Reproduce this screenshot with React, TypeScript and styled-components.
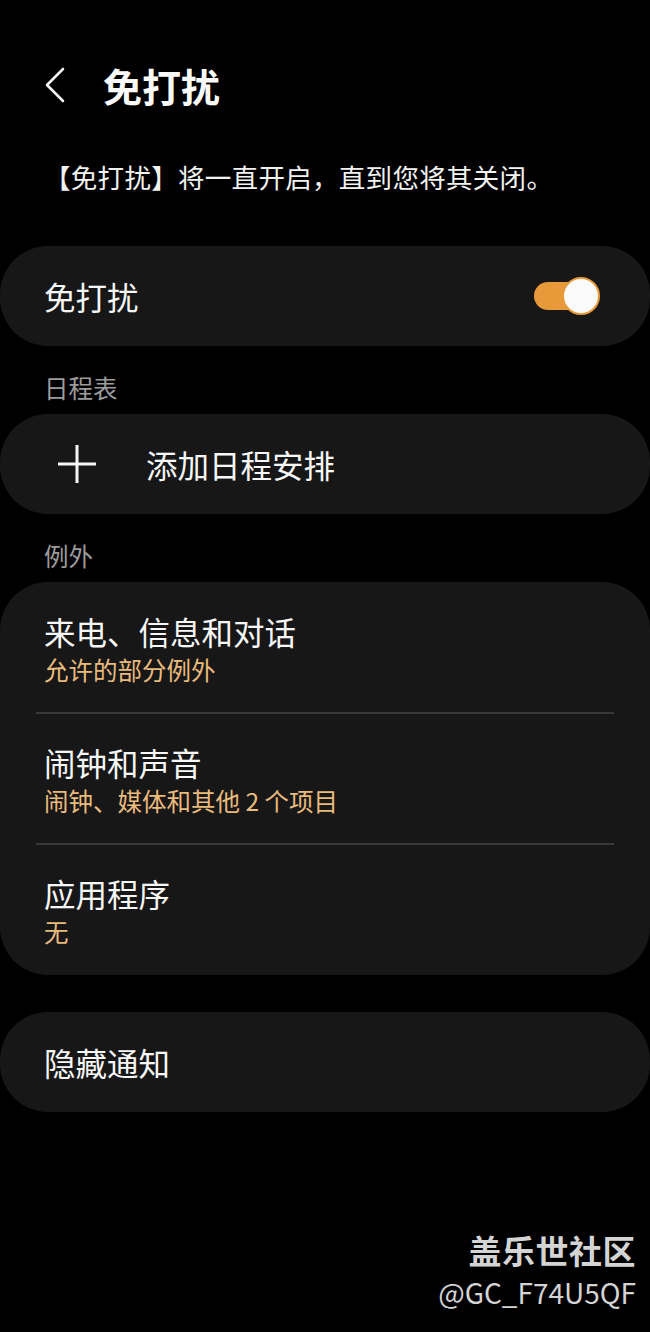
import React from "react";
import styled, { createGlobalStyle } from "styled-components";

const GlobalStyle = createGlobalStyle`
  html, body {
    margin: 0;
    padding: 0;
    background: #000;
  }
  body {
    font-family: "Noto Sans CJK SC", "Noto Sans", sans-serif;
    color: #f5f5f5;
    -webkit-font-smoothing: antialiased;
  }
`;

const Page = styled.div`
  position: relative;
  width: 650px;
  height: 1332px;
  background: #000;
  overflow: hidden;
`;

const Header = styled.header`
  display: flex;
  align-items: center;
  height: 104px;
  padding-top: 33px;
  padding-left: 44px;
  gap: 20px;
`;

const BackButton = styled.button`
  display: flex;
  align-items: center;
  justify-content: flex-start;
  width: 39px;
  height: 40px;
  padding: 0;
  border: none;
  background: transparent;
  color: #f5f5f5;
`;

const Title = styled.h1`
  margin: 0;
  font-size: 39px;
  font-weight: 700;
  line-height: 48px;
  color: #fafafa;
`;

const Description = styled.p`
  margin: 22px 0 51px;
  padding: 0 44px;
  font-size: 26.5px;
  letter-spacing: 0.3px;
  line-height: 36px;
  color: #f2f2f2;
`;

const Card = styled.section`
  background: #171717;
  border-radius: 48px;
  overflow: hidden;
`;

const SingleRow = styled.div`
  display: flex;
  align-items: center;
  height: 100px;
  padding: 0 58px 0 44px;
`;

const RowTitle = styled.div`
  font-size: 31.5px;
  line-height: 40px;
  color: #f7f7f7;
`;

const Spacer = styled.div`
  flex: 1;
`;

const SectionLabel = styled.div`
  height: 41px;
  padding: 27px 44px 0;
  font-size: 24.5px;
  line-height: 30px;
  color: #9c9c9c;
`;

const PlusBox = styled.div`
  width: 40px;
  height: 40px;
  margin-left: 13px;
  margin-right: 49px;
  display: flex;
  align-items: center;
  justify-content: center;
`;

const ToggleTrack = styled.div`
  position: relative;
  width: 58px;
  height: 28px;
  border-radius: 14px;
  background: #e8993a;
`;

const ToggleThumb = styled.div`
  position: absolute;
  right: -8px;
  top: 50%;
  width: 34px;
  height: 34px;
  margin-top: -19px;
  border-radius: 50%;
  background: #fbfbfb;
  border: 2px solid #e8993a;
`;

const ItemRow = styled.div`
  display: flex;
  flex-direction: column;
  height: 131px;
  padding: 29px 44px 0;
  box-sizing: border-box;
`;

const Subtitle = styled.div`
  font-size: 24.5px;
  line-height: 38px;
  color: #e9bb7d;
`;

const Divider = styled.div`
  height: 2px;
  margin: -1px 36px;
  background: #383838;
  position: relative;
`;

const Gap = styled.div`
  height: 37px;
`;

const Watermark = styled.div`
  position: absolute;
  right: 14px;
  top: 1228px;
  display: flex;
  flex-direction: column;
  align-items: flex-end;
  color: #d4d4d4;
  text-shadow: 0 0 2px rgba(0, 0, 0, 0.6);
`;

const WatermarkBrand = styled.div`
  font-size: 33px;
  font-weight: 700;
  line-height: 44px;
  letter-spacing: 0.5px;
`;

const WatermarkUser = styled.div`
  font-size: 28px;
  line-height: 40px;
  font-weight: 400;
`;

const Chevron = () => (
  <svg width="24" height="36" viewBox="0 0 24 36" fill="none">
    <path
      d="M19 2 L3 18 L19 34"
      stroke="#f2f2f2"
      strokeWidth="2.6"
      strokeLinecap="round"
      strokeLinejoin="round"
    />
  </svg>
);

const Plus = () => (
  <svg width="40" height="40" viewBox="0 0 40 40" fill="none">
    <path d="M20 1 V39 M1 20 H39" stroke="#f5f5f5" strokeWidth="3" />
  </svg>
);

const items = [
  { title: "来电、信息和对话", sub: "允许的部分例外" },
  { title: "闹钟和声音", sub: "闹钟、媒体和其他 2 个项目" },
  { title: "应用程序", sub: "无" },
];

export default function App() {
  return (
    <Page>
      <GlobalStyle />
      <Header>
        <BackButton aria-label="返回">
          <Chevron />
        </BackButton>
        <Title>免打扰</Title>
      </Header>
      <Description>【免打扰】将一直开启，直到您将其关闭。</Description>

      <Card>
        <SingleRow>
          <RowTitle>免打扰</RowTitle>
          <Spacer />
          <ToggleTrack>
            <ToggleThumb />
          </ToggleTrack>
        </SingleRow>
      </Card>

      <SectionLabel>日程表</SectionLabel>
      <Card>
        <SingleRow>
          <PlusBox>
            <Plus />
          </PlusBox>
          <RowTitle>添加日程安排</RowTitle>
        </SingleRow>
      </Card>

      <SectionLabel>例外</SectionLabel>
      <Card>
        {items.map((it, i) => (
          <React.Fragment key={it.title}>
            {i > 0 && <Divider />}
            <ItemRow>
              <RowTitle>{it.title}</RowTitle>
              <Subtitle>{it.sub}</Subtitle>
            </ItemRow>
          </React.Fragment>
        ))}
      </Card>

      <Gap />
      <Card>
        <SingleRow>
          <RowTitle>隐藏通知</RowTitle>
        </SingleRow>
      </Card>

      <Watermark>
        <WatermarkBrand>盖乐世社区</WatermarkBrand>
        <WatermarkUser>@GC_F74U5QF</WatermarkUser>
      </Watermark>
    </Page>
  );
}
